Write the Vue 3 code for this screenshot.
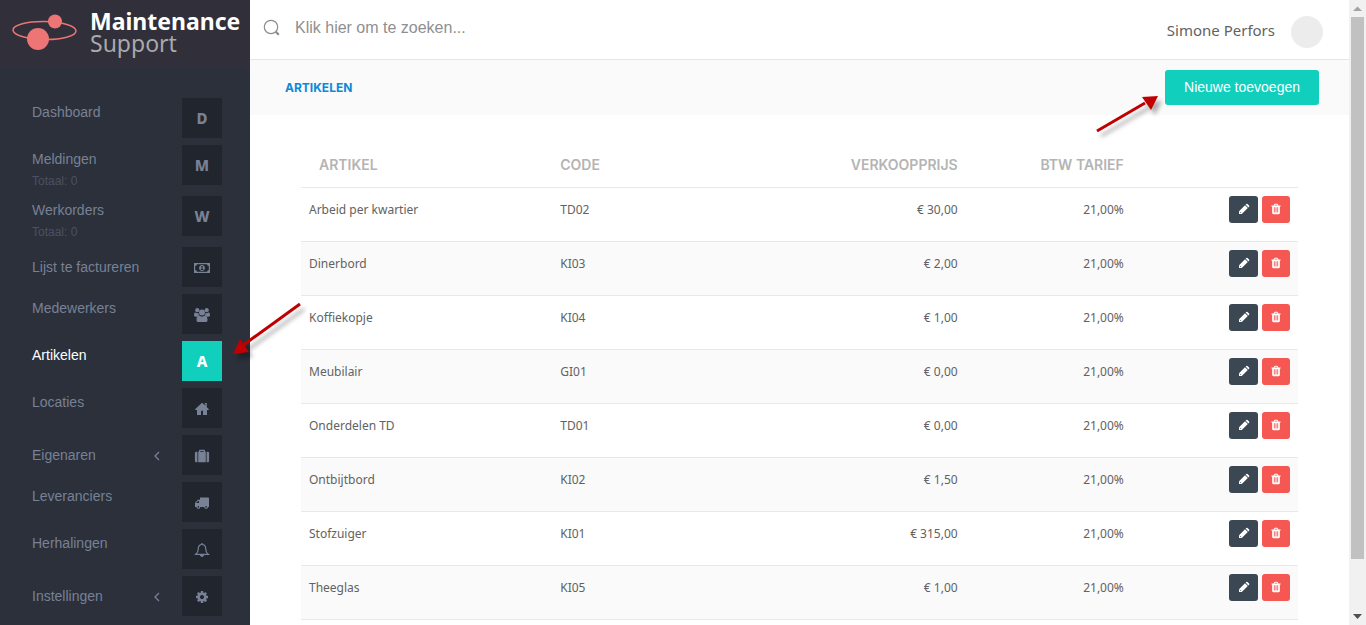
<script setup>
const menu = [
  { label: 'Dashboard', letter: 'D' },
  { label: 'Meldingen', detail: 'Totaal: 0', letter: 'M' },
  { label: 'Werkorders', detail: 'Totaal: 0', letter: 'W' },
  { label: 'Lijst te factureren', icon: 'money', tall: true },
  { label: 'Medewerkers', icon: 'users' },
  { label: 'Artikelen', letter: 'A', active: true },
  { label: 'Locaties', icon: 'home' },
  { label: 'Eigenaren', icon: 'suitcase', tall: true, sub: true },
  { label: 'Leveranciers', icon: 'truck' },
  { label: 'Herhalingen', icon: 'bell' },
  { label: 'Instellingen', icon: 'cog', tall: true, sub: true },
]

const articles = [
  { name: 'Arbeid per kwartier', code: 'TD02', price: '€ 30,00', vat: '21,00%' },
  { name: 'Dinerbord', code: 'KI03', price: '€ 2,00', vat: '21,00%' },
  { name: 'Koffiekopje', code: 'KI04', price: '€ 1,00', vat: '21,00%' },
  { name: 'Meubilair', code: 'GI01', price: '€ 0,00', vat: '21,00%' },
  { name: 'Onderdelen TD', code: 'TD01', price: '€ 0,00', vat: '21,00%' },
  { name: 'Ontbijtbord', code: 'KI02', price: '€ 1,50', vat: '21,00%' },
  { name: 'Stofzuiger', code: 'KI01', price: '€ 315,00', vat: '21,00%' },
  { name: 'Theeglas', code: 'KI05', price: '€ 1,00', vat: '21,00%' },
]
</script>

<template>
  <div class="shell">
    <aside class="sidebar">
      <div class="brand">
        <svg class="brand-mark" width="66" height="40" viewBox="0 0 66 40" aria-hidden="true">
          <ellipse cx="32.500" cy="18.500" rx="31.500" ry="9" fill="none" stroke="#ee7575" stroke-width="1.500" transform="rotate(1 32 18)" />
          <circle cx="43" cy="9.500" r="7" fill="#ee7575" />
          <circle cx="26" cy="27" r="11" fill="#ee7575" />
        </svg>
        <div class="brand-text">
          <strong>Maintenance</strong>
          <span>Support</span>
        </div>
      </div>
      <nav class="menu">
        <a v-for="item in menu" :key="item.label" href="#" class="item" :class="{ tall: item.tall, active: item.active }">
          <span class="item-text">
            <span class="label">{{ item.label }}</span>
            <span v-if="item.detail" class="detail">{{ item.detail }}</span>
          </span>
          <svg v-if="item.sub" class="chevron" width="8" height="40" viewBox="0 0 8 40" aria-hidden="true">
            <path d="M6 17 2 21l4 4" fill="none" stroke="currentColor" stroke-width="1.300" />
          </svg>
          <span class="tile">
            <template v-if="item.letter">{{ item.letter }}</template>
            <svg v-else width="16" height="16" viewBox="0 0 16 16" fill="currentColor" aria-hidden="true">
              <g v-if="item.icon === 'money'">
                <path fill-rule="evenodd" d="M0 3h16v10H0zM3 4.200Q2.800 5.800 1.200 6v4q1.600.2 1.800 1.800h10q.2-1.600 1.800-1.800V6Q13.200 5.800 13 4.200z" />
                <path fill-rule="evenodd" d="M8 5c1.900 0 2.900 1.400 2.900 3S9.900 11 8 11 5.100 9.600 5.100 8 6.100 5 8 5zM6.800 6.800h.7V9h-.7v.9h2.500V9h-.7V6h-.8z" />
              </g>
              <g v-else-if="item.icon === 'users'">
                <circle cx="3.300" cy="3.200" r="2.100" />
                <circle cx="12.700" cy="3.200" r="2.100" />
                <path d="M0 8.300C0 6.600.4 5.500 1.200 5.500c.5 0 1 .7 2.200.7.500 0 .9-.1 1.200-.2-.1 1 .2 1.700.8 2.500C4.400 8.600 3.500 9 3 9.700H1.500C.6 9.700 0 9.200 0 8.300zM16 8.300c0-1.700-.4-2.800-1.200-2.800-.5 0-1 .7-2.200.7-.5 0-.9-.1-1.200-.2.1 1-.2 1.700-.8 2.500 1 .1 1.900.5 2.400 1.200h1.500c.9 0 1.500-.5 1.500-1.400z" />
                <circle cx="8" cy="5.500" r="3" />
                <path d="M2.500 13.200c0-2.700.7-4.700 2.600-4.700.5 0 1.300 1.100 2.900 1.100s2.400-1.100 2.900-1.100c1.900 0 2.600 2 2.600 4.700 0 1.200-.8 1.900-1.900 1.900H4.400c-1.100 0-1.900-.7-1.900-1.900z" />
              </g>
              <path v-else-if="item.icon === 'home'" d="M8 1.800 1 8.300l.7.700H3v4.900h4V9.800h2v4.100h4V9h1.300l.7-.7-2.200-2V2h-2.400l1 1.200v1.200z" />
              <path v-else-if="item.icon === 'suitcase'" fill-rule="evenodd" d="M5 3.800V2.500Q5 1.800 5.700 1.800h4.600q.7 0 .7.700v1.300h.8v10.400H4.200V3.800zM6.200 3.800h3.600V2.900H6.200zM3.400 3.800v10.400h-1.200Q.9 14.200.9 12.900V5.100Q.9 3.800 2.200 3.800zm9.200 0h1.200q1.300 0 1.300 1.300v7.800q0 1.300-1.300 1.300h-1.200z" />
              <path v-else-if="item.icon === 'truck'" fill-rule="evenodd" d="M6 2.600h8.300q.7 0 .7.700v8.600h-1a1.900 1.900 0 0 1-3.800 0H6.300a1.900 1.900 0 0 1-3.800 0H1V8l2.800-3.200H6zM2.200 8H5V6H4zM3.600 11.900a.8.800 0 0 0 1.600 0 .8.800 0 0 0-1.600 0zM11.300 11.900a.8.800 0 0 0 1.600 0 .8.800 0 0 0-1.600 0z" />
              <g v-else-if="item.icon === 'bell'">
                <path d="M8 2.500c-2.700 0-3.700 2-3.700 4.200 0 2.600-.9 4.300-2.500 5.600h12.400c-1.600-1.300-2.500-3-2.500-5.600 0-2.200-1-4.200-3.700-4.200z" fill="none" stroke="currentColor" stroke-width="1.200" />
                <path d="M7.300 1h1.400v1.500H7.300zM6 12.800h4c0 1.300-.9 2.200-2 2.200s-2-.9-2-2.200z" />
              </g>
              <svg v-else x="1" y="1" width="14" height="14" viewBox="0 0 1792 1792"><path d="M1152 896q0-106-75-181t-181-75-181 75-75 181 75 181 181 75 181-75 75-181zm512-109v222q0 12-8 23t-20 13l-185 28q-19 54-39 91 35 50 107 138 10 12 10 25t-9 23q-27 37-99 108t-94 71q-12 0-26-9l-138-108q-44 23-91 38-16 136-29 186-7 28-36 28h-222q-14 0-24.500-8.500t-11.500-21.500l-28-184q-49-16-90-37l-141 107q-10 9-25 9-14 0-25-11-126-114-165-168-7-10-7-23 0-12 8-23 15-21 51-66.500t54-70.500q-27-50-41-99l-183-27q-13-2-21-12.500t-8-23.500v-222q0-12 8-23t19-13l186-28q14-46 39-92-40-57-107-138-10-12-10-24 0-10 9-23 26-36 98.500-107.500t94.500-71.500q13 0 26 10l138 107q44-23 91-38 16-136 29-186 7-28 36-28h222q14 0 24.500 8.500t11.500 21.500l28 184q49 16 90 37l142-107q9-9 24-9 13 0 25 10 129 119 165 170 7 8 7 22 0 12-8 23-15 21-51 66.500t-54 70.500q26 50 41 98l183 28q13 2 21 12.500t8 23.500z" /></svg>
            </svg>
          </span>
          <svg v-if="item.active" class="arrow arrow-menu" width="80" height="70" viewBox="0 0 80 70" aria-hidden="true">
            <path d="M70 7 12 49" stroke="#c00000" stroke-width="3" />
            <path d="M3 57 10 42 19 55z" fill="#c00000" />
          </svg>
        </a>
      </nav>
    </aside>

    <div class="main">
      <header class="topbar">
        <label class="search">
          <svg width="18" height="18" viewBox="0 0 18 18" aria-hidden="true">
            <circle cx="8" cy="8" r="6.700" fill="none" stroke="#8c8c8c" stroke-width="1.200" />
            <path d="m12.800 12.800 3 3" stroke="#8c8c8c" stroke-width="2.200" />
          </svg>
          <input type="text" placeholder="Klik hier om te zoeken..." aria-label="Zoeken" />
        </label>
        <span class="user">Simone Perfors</span>
        <span class="avatar"></span>
      </header>

      <div class="subbar">
        <a href="#" class="crumb">ARTIKELEN</a>
        <div class="add-wrap">
          <button type="button" class="add">Nieuwe toevoegen</button>
          <svg class="arrow arrow-add" width="80" height="56" viewBox="0 0 80 56" aria-hidden="true">
            <path d="M6 46 54 18" stroke="#c00000" stroke-width="3" />
            <path d="M67 11 51 12 60 25z" fill="#c00000" />
          </svg>
        </div>
      </div>

      <main class="content">
        <table>
          <thead>
            <tr>
              <th class="c-name">ARTIKEL</th>
              <th class="c-code">CODE</th>
              <th class="c-price num">VERKOOPPRIJS</th>
              <th class="c-vat num">BTW TARIEF</th>
              <th class="c-act"></th>
            </tr>
          </thead>
          <tbody>
            <tr v-for="a in articles" :key="a.code">
              <td>{{ a.name }}</td>
              <td>{{ a.code }}</td>
              <td class="num">{{ a.price }}</td>
              <td class="num">{{ a.vat }}</td>
              <td>
                <div class="actions">
                  <button type="button" class="edit" aria-label="Bewerken">
                    <svg width="12" height="12" viewBox="0 0 12 12" fill="#fff" aria-hidden="true">
                      <path d="M1 11V8.200L7 2.200 9.800 5l-6 6zM7.600 1.600l.7-.7q.6-.5 1.200 0l1.600 1.600q.5.600 0 1.200l-.7.700z" />
                      <path d="M1.900 8.800 3.200 10.100" stroke="#3b4752" stroke-width=".7" />
                    </svg>
                  </button>
                  <button type="button" class="delete" aria-label="Verwijderen">
                    <svg width="12" height="12" viewBox="0 0 1792 1792" fill="#fff" aria-hidden="true"><path d="M704 1376v-704q0-14-9-23t-23-9h-64q-14 0-23 9t-9 23v704q0 14 9 23t23 9h64q14 0 23-9t9-23zm256 0v-704q0-14-9-23t-23-9h-64q-14 0-23 9t-9 23v704q0 14 9 23t23 9h64q14 0 23-9t9-23zm256 0v-704q0-14-9-23t-23-9h-64q-14 0-23 9t-9 23v704q0 14 9 23t23 9h64q14 0 23-9t9-23zm-544-992h448l-48-117q-7-9-17-11h-317q-10 2-17 11zm928 32v64q0 14-9 23t-23 9h-96v948q0 83-47 143.500t-113 60.500h-832q-66 0-113-58.500t-47-141.500v-952h-96q-14 0-23-9t-9-23v-64q0-14 9-23t23-9h309l70-167q15-37 54-63t79-26h320q40 0 79 26t54 63l70 167h309q14 0 23 9t9 23z" /></svg>
                  </button>
                </div>
              </td>
            </tr>
          </tbody>
        </table>
      </main>
    </div>

    <div class="scrollbar" aria-hidden="true">
      <svg width="17" height="17" viewBox="0 0 17 17"><path d="M4 11h9L8.500 6.500z" fill="#a3a3a3" /></svg>
      <div class="track"><div class="thumb"></div></div>
      <svg width="17" height="17" viewBox="0 0 17 17"><path d="M4 6h9l-4.500 5z" fill="#505050" /></svg>
    </div>
  </div>
</template>

<style>
body {
  background: #fff;
}
</style>

<style scoped>
* {
  box-sizing: border-box;
}

.shell {
  display: flex;
  height: 100vh;
  overflow: hidden;
  font-family: "Noto Sans", "Open Sans", sans-serif;
  font-size: 12px;
  color: #626262;
}

a {
  text-decoration: none;
}

button {
  border: 0;
  padding: 0;
  border-radius: 3px;
  cursor: pointer;
}

.sidebar {
  position: relative;
  z-index: 2;
  flex: none;
  width: 250px;
  background: #2b303b;
}

.brand {
  display: flex;
  gap: 12px;
  height: 67px;
  padding: 10px 0 0 12px;
  background: #302f3a;
}

.brand-mark {
  margin-top: 2px;
}

.brand-text {
  display: flex;
  flex-direction: column;
  font-size: 23px;
  line-height: 22px;
  color: #a9a9ab;
}

.brand-text strong {
  color: #fff;
}

.menu {
  display: flex;
  flex-direction: column;
  gap: 7px;
  padding: 31px 28px 0 32px;
}

.item {
  position: relative;
  display: flex;
  align-items: flex-start;
  color: #788195;
  font-family: "Liberation Sans", Arial, sans-serif;
  font-size: 14px;
}

.item-text {
  display: flex;
  flex: 1;
  flex-direction: column;
}

.label {
  line-height: 28px;
}

.tall .label {
  line-height: 40px;
}

.detail {
  font-size: 12px;
  line-height: 16px;
  color: #4b5060;
}

.chevron {
  margin-right: 21px;
}

.tile {
  display: flex;
  align-items: center;
  justify-content: center;
  width: 40px;
  height: 40px;
  background: #21252d;
  font-family: "Noto Sans", sans-serif;
  font-size: 15px;
  font-weight: 800;
}

.tile > svg {
  margin-top: 2px;
}

.active {
  color: #fff;
}

.active .tile {
  background: #10cfbd;
}

.arrow {
  position: absolute;
  pointer-events: none;
  filter: drop-shadow(4px 5px 2px rgba(0, 0, 0, 0.3));
}

.arrow-menu {
  left: 198px;
  top: -44px;
}

.main {
  flex: 1;
  min-width: 0;
  background: #fff;
}

.topbar {
  display: flex;
  align-items: center;
  height: 60px;
  padding: 4px 26px 0 13px;
  border-bottom: 1px solid #e6e6e6;
}

.search {
  display: flex;
  flex: 1;
  align-items: center;
  gap: 14px;
  margin-bottom: 8px;
}

.search input {
  flex: 1;
  height: 24px;
  padding: 0;
  border: 0;
  outline: 0;
  background: transparent;
  font-family: "Liberation Sans", Arial, sans-serif;
  font-size: 16px;
}

.search input::placeholder {
  color: #8f8f8f;
  opacity: 1;
}

.user {
  margin-bottom: 4px;
  font-size: 15px;
}

.avatar {
  width: 32px;
  height: 32px;
  margin-left: 16px;
  border-radius: 50%;
  background: #ececec;
}

.subbar {
  display: flex;
  align-items: center;
  justify-content: space-between;
  padding: 10px 30px 10px 35px;
  background: #fafafa;
}

.crumb {
  color: #0a8bd6;
  font-family: Inter, sans-serif;
  font-size: 12px;
  font-weight: 700;
}

.add-wrap {
  position: relative;
}

.add {
  display: block;
  height: 35px;
  padding: 0 19px 2px;
  background: #10cfbd;
  color: #fff;
  font-family: "Liberation Sans", Arial, sans-serif;
  font-size: 14px;
}

.arrow-add {
  left: -74px;
  top: 15px;
}

.content {
  padding: 26px 51px 0;
}

table {
  width: 100%;
  table-layout: fixed;
  border-collapse: separate;
  border-spacing: 0;
}

.c-name {
  width: 25.2%;
}

.c-code {
  width: 24.8%;
}

th {
  height: 47px;
  padding: 0 8px;
  border-bottom: 1px solid #e8e8e8;
  color: #b4b4b4;
  font-family: Inter, sans-serif;
  font-size: 14px;
  font-weight: 600;
  text-align: left;
}

th.c-name {
  padding-left: 18px;
}

td {
  height: 54px;
  padding: 8px;
  border-bottom: 1px solid #e8e8e8;
  line-height: 27px;
  vertical-align: top;
}

tbody tr:nth-child(even) td {
  background: #fafafa;
}

.num {
  text-align: right;
}

.actions {
  display: flex;
  justify-content: flex-end;
  gap: 4px;
}

.actions button {
  display: flex;
  align-items: center;
  justify-content: center;
  width: 28px;
  height: 27px;
  padding-bottom: 1px;
}

.actions .edit {
  width: 29px;
  background: #3b4752;
}

.actions .delete {
  background: #f55753;
}

.scrollbar {
  display: flex;
  flex: none;
  flex-direction: column;
  width: 17px;
  background: #f1f1f1;
}

.track {
  flex: 1;
  padding: 0 2px;
}

.thumb {
  height: 91.7%;
  background: #c1c1c1;
}

.num {
  text-align: right;
}
</style>
